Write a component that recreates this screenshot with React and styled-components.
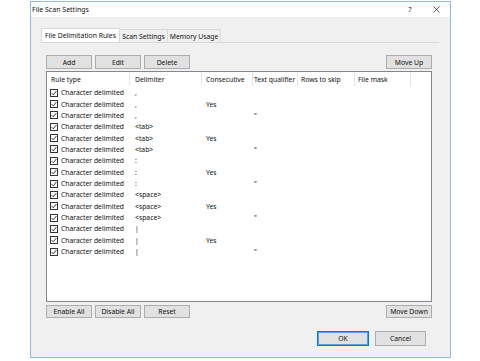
import React from "react";
import styled, { createGlobalStyle } from "styled-components";

const Global = createGlobalStyle`
  html, body { margin: 0; padding: 0; background: #ffffff; }
  body { font-family: "Noto Sans", "Open Sans", sans-serif; font-size: 6.8px; color: #111; }
  * { box-sizing: border-box; }
`;

const Window = styled.div`
  margin: 1px 0 0 30px;
  width: 421px;
  height: 357px;
  border: 1px solid #8cbbe8;
  display: flex;
  flex-direction: column;
  background: #f0f0f0;
`;

const TitleBar = styled.div`
  height: 15px;
  background: #ffffff;
  display: flex;
  align-items: center;
  padding-left: 1px;
  font-size: 7px;
`;

const TitleText = styled.span`
  flex: 1;
`;

const TitleButton = styled.span`
  width: 28px;
  margin-right: ${p => p.$mr || 0}px;
  display: flex;
  justify-content: center;
  align-items: center;
  color: #222;
`;

const Body = styled.div`
  flex: 1;
  display: flex;
  flex-direction: column;
  padding: 11px 11px 0 10px;
`;

const Tabs = styled.div`
  display: flex;
  height: 14px;
`;

const Tab = styled.div`
  width: ${p => p.$w}px;
  display: flex;
  align-items: center;
  justify-content: center;
  background: ${p => (p.$active ? "#ffffff" : "#f0f0f0")};
  border: 1px solid #d9d9d9;
  border-bottom: none;
  border-left: ${p => (p.$active ? "1px solid #d9d9d9" : "none")};
  margin-top: ${p => (p.$active ? 0 : 1)}px;
  white-space: nowrap;
`;

const Panel = styled.div`
  border-top: 1px solid #d9d9d9;
  padding: 12px 7px 0 5px;
  display: flex;
  flex-direction: column;
`;

const ButtonRow = styled.div`
  display: flex;
  gap: 3px;
  height: 14px;
`;

const Spacer = styled.div`
  flex: 1;
`;

const Btn = styled.button`
  font: inherit;
  font-size: 6.8px;
  color: #111;
  width: ${p => p.$w || 46}px;
  height: 100%;
  padding: 0;
  margin: 0;
  background: #e1e1e1;
  border: 1px solid ${p => (p.$default ? "#0078d7" : "#adadad")};
  box-shadow: ${p => (p.$default ? "inset 0 0 0 1px #5aa0e0" : "none")};
`;

const ListBox = styled.div`
  margin: 2px 0 3px;
  height: 231px;
  border: 1px solid #828790;
  background: #ffffff;
  display: flex;
  flex-direction: column;
`;

const cols = [83, 72, 51, 45, 57, 56];

const HeaderRow = styled.div`
  display: flex;
  height: 14px;
  margin-bottom: 1px;
`;

const HeaderCell = styled.div`
  width: ${p => p.$w}px;
  border-right: 1px solid #e5e5e5;
  display: flex;
  align-items: center;
  padding-left: ${p => p.$pl}px;
  white-space: nowrap;
  overflow: hidden;
`;

const Row = styled.div`
  display: flex;
  height: 11.36px;
  align-items: center;
`;

const Cell = styled.div`
  width: ${p => p.$w}px;
  padding-left: ${p => p.$pl}px;
  display: flex;
  align-items: center;
  white-space: nowrap;
  overflow: hidden;
`;

const CheckBox = styled.span`
  width: 8px;
  height: 8px;
  border: 1px solid #333333;
  background: #fff;
  display: inline-flex;
  align-items: center;
  justify-content: center;
  margin-right: 3px;
  flex: none;
`;

const BottomRow = styled.div`
  display: flex;
  gap: 3px;
  height: 13px;
`;

const Footer = styled.div`
  display: flex;
  justify-content: flex-end;
  gap: 6px;
  height: 15px;
  margin-top: 13px;
  padding-right: 6px;
`;

const rows = [
  [",", "", ""],
  [",", "Yes", ""],
  [",", "", "\""],
  ["<tab>", "", ""],
  ["<tab>", "Yes", ""],
  ["<tab>", "", "\""],
  [":", "", ""],
  [":", "Yes", ""],
  [":", "", "\""],
  ["<space>", "", ""],
  ["<space>", "Yes", ""],
  ["<space>", "", "\""],
  ["|", "", ""],
  ["|", "Yes", ""],
  ["|", "", "\""],
];

const Check = () => (
  <svg width="6" height="6" viewBox="0 0 6 6">
    <path d="M0.6 3.1 L2.3 4.8 L5.4 1.0" fill="none" stroke="#222" strokeWidth="0.9" />
  </svg>
);

const CloseIcon = () => (
  <svg width="7" height="7" viewBox="0 0 7 7">
    <path d="M0.5 0.5 L6.5 6.5 M6.5 0.5 L0.5 6.5" stroke="#333" strokeWidth="0.8" />
  </svg>
);

export default function App() {
  const headers = [
    ["Rule type", 4],
    ["Delimiter", 5],
    ["Consecutive", 4],
    ["Text qualifier", 1],
    ["Rows to skip", 3],
    ["File mask", 3],
  ];
  return (
    <>
      <Global />
      <Window>
        <TitleBar>
          <TitleText>File Scan Settings</TitleText>
          <TitleButton $mr={-2}>?</TitleButton>
          <TitleButton><CloseIcon /></TitleButton>
        </TitleBar>
        <Body>
          <Tabs>
            <Tab $active $w={79}>File Delimitation Rules</Tab>
            <Tab $w={48}>Scan Settings</Tab>
            <Tab $w={53}>Memory Usage</Tab>
          </Tabs>
          <Panel>
            <ButtonRow>
              <Btn>Add</Btn>
              <Btn>Edit</Btn>
              <Btn>Delete</Btn>
              <Spacer />
              <Btn>Move Up</Btn>
            </ButtonRow>
            <ListBox>
              <HeaderRow>
                {headers.map(([h, pl], i) => (
                  <HeaderCell key={h} $w={cols[i]} $pl={pl}>{h}</HeaderCell>
                ))}
              </HeaderRow>
              {rows.map((r, i) => (
                <Row key={i}>
                  <Cell $w={cols[0]} $pl={3}>
                    <CheckBox><Check /></CheckBox>
                    Character delimited
                  </Cell>
                  <Cell $w={cols[1]} $pl={5}>{r[0]}</Cell>
                  <Cell $w={cols[2]} $pl={4}>{r[1]}</Cell>
                  <Cell $w={cols[3]} $pl={1}>{r[2]}</Cell>
                  <Cell $w={cols[4]} $pl={3}></Cell>
                  <Cell $w={cols[5]} $pl={3}></Cell>
                </Row>
              ))}
            </ListBox>
            <BottomRow>
              <Btn>Enable All</Btn>
              <Btn>Disable All</Btn>
              <Btn>Reset</Btn>
              <Spacer />
              <Btn>Move Down</Btn>
            </BottomRow>
            <Footer>
              <Btn $default $w={52}>OK</Btn>
              <Btn $w={51}>Cancel</Btn>
            </Footer>
          </Panel>
        </Body>
      </Window>
    </>
  );
}
